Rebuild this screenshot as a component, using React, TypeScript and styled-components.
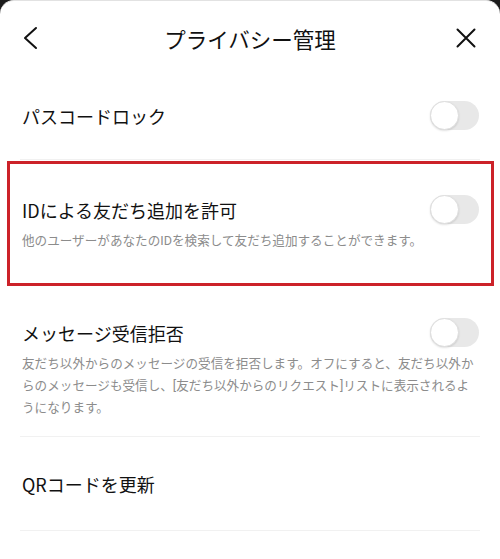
import * as React from 'react';
import styled, { createGlobalStyle } from 'styled-components';

const GlobalStyle = createGlobalStyle`
  html, body {
    margin: 0;
    padding: 0;
    background: #1c1c1c;
  }
  body {
    font-family: "Noto Sans CJK JP", "Noto Sans", sans-serif;
    color: #111;
  }
`;

const Sheet = styled.div`
  background: #fff;
  border-radius: 14px 14px 0 0;
  border-top: 1px solid #e2e2e2;
  min-height: 558px;
  overflow: hidden;
`;

const Header = styled.header`
  height: 74px;
  display: flex;
  align-items: center;
  justify-content: space-between;
  padding: 0 24px 0 20px;
  box-sizing: border-box;
`;

const IconButton = styled.button`
  border: none;
  background: none;
  padding: 0;
  width: 20px;
  height: 24px;
  display: flex;
  align-items: center;
  justify-content: center;
  cursor: pointer;
`;

const Title = styled.h1`
  margin: 0 0 0 4px;
  font-size: 21.5px;
  font-weight: 400;
  color: #111;
`;

const Row = styled.div<{ $pt: number; $pb: number; $marked?: boolean }>`
  position: relative;
  padding: ${(p) => p.$pt}px 20px ${(p) => p.$pb}px 22px;

  ${(p) =>
    p.$marked &&
    `
    &::after {
      content: '';
      position: absolute;
      top: 1px;
      left: 7px;
      right: 6px;
      bottom: 0;
      border: 3px solid #cc2229;
      pointer-events: none;
    }
  `}
`;

const RowHead = styled.div`
  display: flex;
  align-items: center;
  justify-content: space-between;
  min-height: 29px;
`;

const Label = styled.span`
  font-size: 18px;
  line-height: 26px;
  color: #111;
`;

const Desc = styled.p`
  margin: 6px 0 0;
  font-family: Roboto, "Noto Sans CJK JP", sans-serif;
  font-size: 12.6px;
  line-height: 22px;
  color: #8c8c8c;
`;

const Divider = styled.hr`
  margin: 0 20px;
  border: none;
  height: 1px;
  background: #f1f1f1;
`;

const Track = styled.span<{ $on?: boolean }>`
  position: relative;
  width: 49px;
  height: 29px;
  border-radius: 15px;
  background: ${(p) => (p.$on ? '#06c755' : '#e8e8e8')};
  flex-shrink: 0;
  margin-right: 1px;
`;

const Knob = styled.span`
  position: absolute;
  top: 0;
  left: 0;
  width: 29px;
  height: 29px;
  box-sizing: border-box;
  border-radius: 50%;
  background: #fff;
  border: 1px solid #dedede;
  box-shadow: 0 1px 2px rgba(0, 0, 0, 0.12);
`;

function Toggle() {
  return (
    <Track>
      <Knob />
    </Track>
  );
}

function BackIcon() {
  return (
    <svg width="16" height="24" viewBox="0 0 16 24" fill="none">
      <path d="M14 2 L3 12 L14 22" stroke="#111" strokeWidth="2" strokeLinecap="round" strokeLinejoin="round" />
    </svg>
  );
}

function CloseIcon() {
  return (
    <svg width="20" height="20" viewBox="0 0 20 20" fill="none">
      <path d="M1.5 1.5 L18.5 18.5 M18.5 1.5 L1.5 18.5" stroke="#111" strokeWidth="2" strokeLinecap="round" />
    </svg>
  );
}

export default function App() {
  return (
    <>
      <GlobalStyle />
      <Sheet>
        <Header>
          <IconButton aria-label="戻る">
            <BackIcon />
          </IconButton>
          <Title>プライバシー管理</Title>
          <IconButton aria-label="閉じる">
            <CloseIcon />
          </IconButton>
        </Header>

        <Row $pt={26} $pb={29}>
          <RowHead>
            <Label>パスコードロック</Label>
            <Toggle />
          </RowHead>
        </Row>
        <Divider />

        <Row $pt={35} $pb={34} $marked>
          <RowHead>
            <Label>IDによる友だち追加を許可</Label>
            <Toggle />
          </RowHead>
          <Desc>他のユーザーがあなたのIDを検索して友だち追加することができます。</Desc>
        </Row>

        <Row $pt={32} $pb={17}>
          <RowHead>
            <Label>メッセージ受信拒否</Label>
            <Toggle />
          </RowHead>
          <Desc>
            友だち以外からのメッセージの受信を拒否します。オフにすると、友だち以外からのメッセージも受信し、[友だち以外からのリクエスト]リストに表示されるようになります。
          </Desc>
        </Row>
        <Divider />

        <Row $pt={34} $pb={33}>
          <Label>QRコードを更新</Label>
        </Row>
        <Divider />
      </Sheet>
    </>
  );
}
